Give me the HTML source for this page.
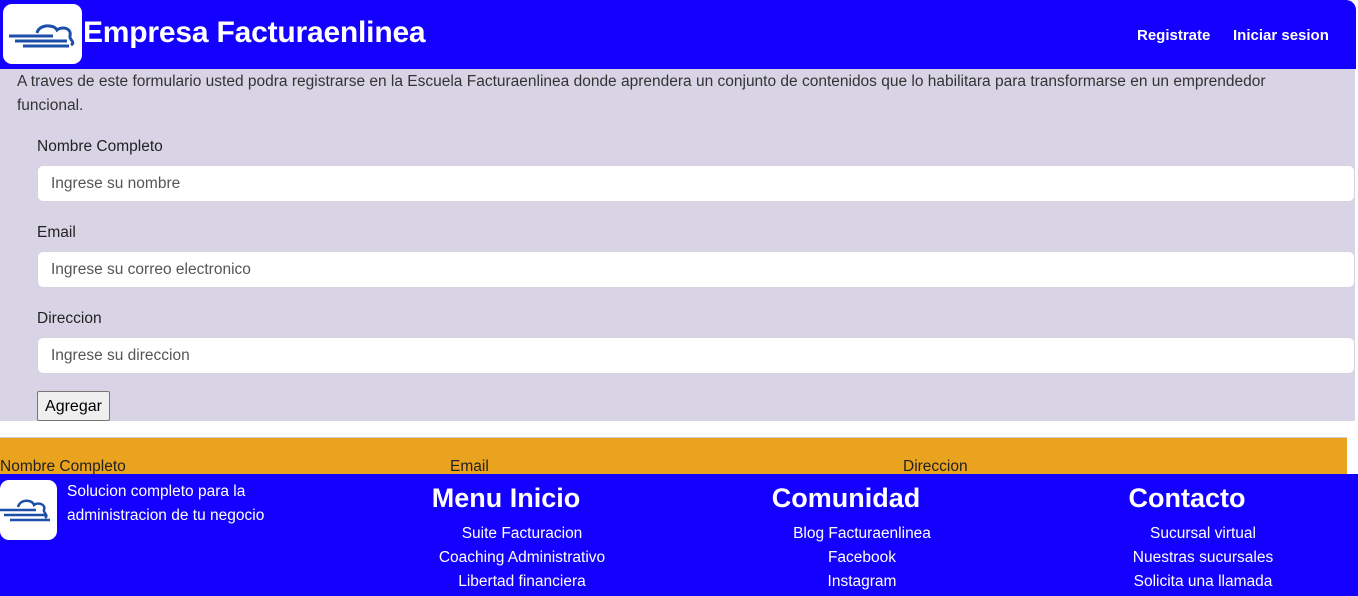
<!DOCTYPE html>
<html><head><meta charset="utf-8"><style>
*{box-sizing:border-box;margin:0;padding:0}
body{width:1358px;height:596px;overflow:hidden;background:#fff;font-family:"Liberation Sans",sans-serif;position:relative}
.hdr{position:absolute;left:0;top:0;width:1356px;height:69px;background:#1400ff;border-top-right-radius:10px}
.logo{position:absolute;background:#fff;border-radius:9px}
.title{position:absolute;left:83px;top:16px;color:#fff;font-size:30px;font-weight:bold;letter-spacing:-0.2px}
.nav{position:absolute;top:27px;color:#fff;font-weight:bold;font-size:15px}
.main{position:absolute;left:0;top:69px;width:1355px;height:352px;background:#d8d4e6}
.intro{position:absolute;left:17px;top:1px;width:1290px;font-size:15.5px;line-height:24px;color:#333}
.lbl{position:absolute;left:37px;font-size:15.5px;color:#222}
.inp{position:absolute;left:37px;width:1318px;height:37px;background:#fff;border:1px solid #d6d3df;border-radius:6px;padding-left:13px;font-size:15.5px;color:#555;line-height:36px}
.btn{position:absolute;left:37px;top:322px;width:73px;height:30px;border:1px solid #767676;background:#efefef;border-radius:2px;font-size:16px;text-align:center;line-height:29px;color:#000}
.or{position:absolute;left:0;top:437px;width:1347px;height:37px;background:#eaa31f;border-top:1px solid #ccc;overflow:hidden}
.or span{position:absolute;top:20px;font-size:15.5px;color:#222}
.ft{position:absolute;left:0;top:474px;width:1358px;height:122px;background:#1400ff;color:#fff}
.col{position:absolute;top:6px;width:300px;text-align:center}
.col h2{font-size:27px;font-weight:bold;margin-bottom:6px;height:36px;line-height:36px}
.col div{font-size:15.5px;line-height:24px;padding-left:32px}
</style></head><body>
<div class="hdr">
 <div class="logo" style="left:3px;top:4px;width:79px;height:60px">
  <svg width="79" height="60" viewBox="0 0 79 60"><g fill="none" stroke="#1d4fa8" stroke-width="3"><path d="M6 32H50M12 37H64M20 42H66"/><path d="M34 29c2-9 17-9 20-3 5-4 15-2 13 6-1 4 6 6 1 9"/></g></svg>
 </div>
 <div class="title">Empresa Facturaenlinea</div>
 <div class="nav" style="left:1137px">Registrate</div>
 <div class="nav" style="left:1233px">Iniciar sesion</div>
</div>
<div class="main">
 <div class="intro">A traves de este formulario usted podra registrarse en la Escuela Facturaenlinea donde aprendera un conjunto de contenidos que lo habilitara para transformarse en un emprendedor funcional.</div>
 <div class="lbl" style="top:69px">Nombre Completo</div>
 <div class="inp" style="top:96px">Ingrese su nombre</div>
 <div class="lbl" style="top:155px">Email</div>
 <div class="inp" style="top:182px">Ingrese su correo electronico</div>
 <div class="lbl" style="top:241px">Direccion</div>
 <div class="inp" style="top:268px">Ingrese su direccion</div>
 <div class="btn">Agregar</div>
</div>
<div class="or"><span style="left:0">Nombre Completo</span><span style="left:450px">Email</span><span style="left:903px">Direccion</span></div>
<div class="ft">
 <div class="logo" style="left:0;top:6px;width:57px;height:60px">
  <svg width="57" height="60" viewBox="0 0 57 60"><g fill="none" stroke="#1d4fa8" stroke-width="2.5"><path d="M0 30H36M4 35H46M10 40H50"/><path d="M18 27c2-8 14-8 16-2 4-3 12-1 10 5-1 3 5 5 1 8"/></g></svg>
 </div>
 <div style="position:absolute;left:67px;top:6px;font-size:15.5px;line-height:24px;width:240px">Solucion completo para la administracion de tu negocio</div>
 <div class="col" style="left:356px"><h2>Menu Inicio</h2><div>Suite Facturacion</div><div>Coaching Administrativo</div><div>Libertad financiera</div></div>
 <div class="col" style="left:696px"><h2>Comunidad</h2><div>Blog Facturaenlinea</div><div>Facebook</div><div>Instagram</div></div>
 <div class="col" style="left:1037px"><h2>Contacto</h2><div>Sucursal virtual</div><div>Nuestras sucursales</div><div>Solicita una llamada</div></div>
</div>
</body></html>
